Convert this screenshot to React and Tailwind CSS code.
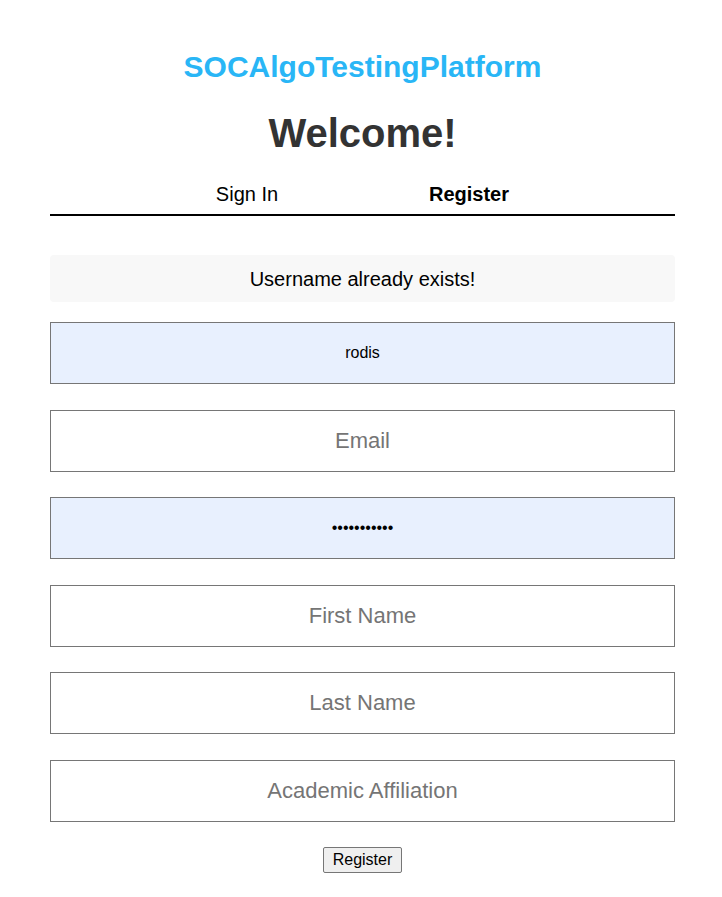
export default function App() {
  const fields = [
    { placeholder: "Username", value: "rodis", filled: true, type: "text" },
    { placeholder: "Email", value: "", filled: false, type: "email" },
    { placeholder: "Password", value: "rodis123456", filled: true, type: "password" },
    { placeholder: "First Name", value: "", filled: false, type: "text" },
    { placeholder: "Last Name", value: "", filled: false, type: "text" },
    { placeholder: "Academic Affiliation", value: "", filled: false, type: "text" },
  ];

  return (
    <div
      className="min-h-screen bg-white pl-[50px]"
      style={{ fontFamily: '"Liberation Sans", Arial, sans-serif' }}
    >
      <div className="w-[625px] pt-[48px] flex flex-col items-center">
        <h1 className="text-[30px] leading-[38px] font-bold text-[#29b6f6]">
          SOCAlgoTestingPlatform
        </h1>
        <h2 className="mt-[22px] text-[40px] leading-[50px] font-bold text-[#333333]">
          Welcome!
        </h2>

        <div className="mt-[16px] w-full border-b-2 border-black flex justify-center pr-[9px]">
          <button className="w-[222px] h-[40px] text-[20px] text-black">Sign In</button>
          <button className="w-[222px] h-[40px] text-[20px] font-bold text-black">
            Register
          </button>
        </div>

        <div className="mt-[39px] w-full h-[47px] bg-[#f8f8f8] rounded-[4px] flex items-center justify-center text-[20px] text-black">
          Username already exists!
        </div>

        <form className="w-full mt-[20px] flex flex-col gap-[25.5px]">
          {fields.map((f) => (
            <input
              key={f.placeholder}
              type={f.type}
              placeholder={f.placeholder}
              defaultValue={f.value}
              className={`w-full h-[62px] border border-[#767676] text-center outline-none placeholder:text-[#757575] ${
                f.filled ? "bg-[#e8f0fe] text-[16px] text-black" : "bg-white text-[22px]"
              }`}
              style={{ fontFamily: '"Liberation Sans", Arial, sans-serif' }}
            />
          ))}
        </form>

        <button
          type="button"
          className="mt-[25px] px-[9px] h-[26px] text-[16px] leading-none text-black bg-[#efefef] border border-[#767676] rounded-[2px]"
        >
          Register
        </button>
      </div>
    </div>
  );
}
